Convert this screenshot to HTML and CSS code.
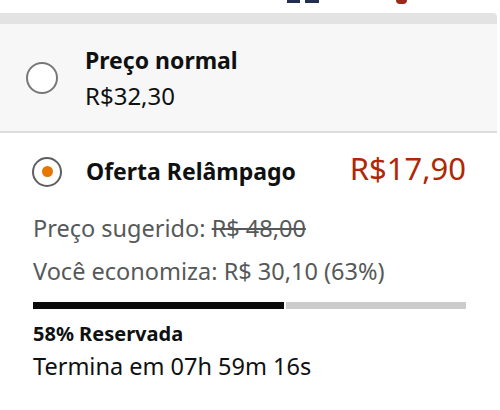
FILE: index.html
```html
<!DOCTYPE html>
<html lang="pt-BR">
<head>
<meta charset="utf-8">
<title>Oferta</title>
<link rel="stylesheet" href="styles.css">
</head>
<body>
<div class="top">
  <span class="frag frag-blue1"></span>
  <span class="frag frag-blue2"></span>
  <span class="frag frag-red"></span>
</div>
<div class="card card-normal">
  <span class="radio"></span>
  <div class="normal-text">
    <div class="title">Preço normal</div>
    <div class="normal-price">R$32,30</div>
  </div>
</div>
<div class="card card-deal">
  <div class="deal-head">
    <span class="radio radio-on"><span class="dot"></span></span>
    <span class="title">Oferta Relâmpago</span>
    <span class="deal-price">R$17,90</span>
  </div>
  <div class="info info-first">Preço sugerido: <s>R$ 48,00</s></div>
  <div class="info">Você economiza: R$ 30,10 (63%)</div>
  <div class="bar"><span class="bar-fill" style="width:58%"></span><span class="bar-rest"></span></div>
  <div class="claimed">58% Reservada</div>
  <div class="ends">Termina em 07h 59m 16s</div>
</div>
</body>
</html>
```
FILE: styles.css
```css
html, body {
  margin: 0;
  padding: 0;
  background: #ffffff;
}
body {
  width: 500px;
  height: 410px;
  overflow: hidden;
  font-family: "Noto Sans", "Open Sans", sans-serif;
  color: #0f1111;
}
.top {
  height: 13px;
  display: flex;
  align-items: flex-start;
}
.frag {
  display: block;
  height: 3px;
}
.frag-blue1 {
  margin-left: 287px;
  width: 13px;
  background: #232f4e;
}
.frag-blue2 {
  margin-left: 5px;
  width: 14px;
  background: #232f4e;
}
.frag-red {
  margin-left: 77px;
  width: 11px;
  height: 4px;
  border-radius: 0 0 6px 6px;
  background: #9c2a1a;
}
.card-normal {
  width: 497px;
  box-sizing: border-box;
  background: #f7f7f7;
  border-top: 11px solid #e3e3e3;
  border-bottom: 2px solid #dddddd;
  border-top-right-radius: 4px;
  display: flex;
  align-items: center;
  padding: 19px 0 18px 26px;
}
.radio {
  display: flex;
  align-items: center;
  justify-content: center;
  box-sizing: border-box;
  width: 32px;
  height: 32px;
  border-radius: 50%;
  border: 2px solid #777777;
  background: #ffffff;
  flex-shrink: 0;
}
.normal-text {
  margin-left: 27px;
}
.title {
  font-weight: 700;
  font-size: 23px;
  line-height: 35px;
  color: #0f1111;
}
.normal-price {
  font-size: 24px;
  line-height: 35px;
  color: #0f1111;
}
.card-deal {
  padding: 15px 34px 0 33px;
}
.deal-head {
  display: flex;
  align-items: baseline;
}
.radio-on {
  align-self: center;
  width: 30px;
  height: 30px;
  margin-left: -1px;
  margin-top: 4px;
  border: 2px solid #5f5f5f;
}
.dot {
  width: 11px;
  height: 11px;
  border-radius: 50%;
  background: #e77600;
}
.deal-head .title {
  margin-left: 24px;
  line-height: 40px;
}
.deal-price {
  margin-left: auto;
  font-size: 31px;
  line-height: 40px;
  color: #b12704;
}
.info {
  font-size: 23.5px;
  line-height: 43px;
  color: #565959;
}
.info-first {
  margin-top: 16px;
}
.info s {
  text-decoration-thickness: 2px;
}
.bar {
  display: flex;
  gap: 2px;
  height: 7px;
  margin-top: 9px;
}
.bar-fill {
  display: block;
  background: #0a0a0a;
}
.bar-rest {
  display: block;
  flex: 1;
  background: #cccccc;
}
.claimed {
  margin-top: 11px;
  font-weight: 700;
  font-size: 20px;
  line-height: 28px;
  color: #0f1111;
}
.ends {
  margin-top: 1px;
  font-size: 23.5px;
  line-height: 35px;
  color: #0f1111;
}
```
